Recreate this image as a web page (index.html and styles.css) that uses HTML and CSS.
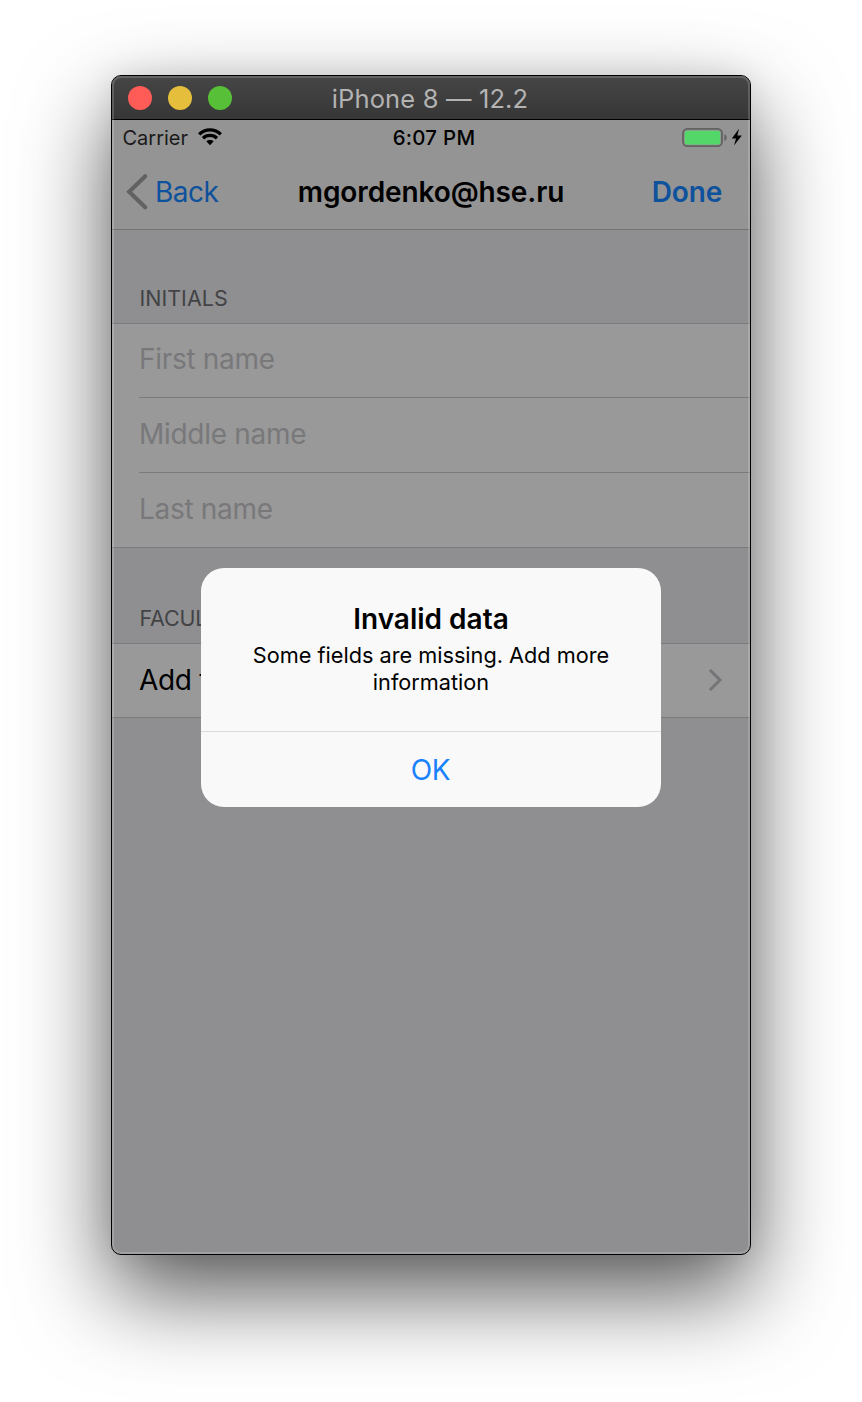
FILE: index.html
```html
<!DOCTYPE html>
<html lang="en">
<head>
<meta charset="utf-8">
<title>iPhone 8 — 12.2</title>
<link rel="stylesheet" href="styles.css">
</head>
<body>
<main class="window">
  <header class="titlebar">
    <div class="lights"><i class="light red"></i><i class="light yellow"></i><i class="light green"></i></div>
    <div class="window-title"><span>iPhone 8 — 12.2</span></div>
  </header>
  <div class="screen">
    <div class="status">
      <div class="status-left">
        <span class="carrier">Carrier</span>
        <svg class="wifi" width="24" height="18" viewBox="0 0 24 18">
          <g fill="none" stroke="#000" stroke-width="3.3">
            <path d="M1.2 6.3C7.2.3 16.8.3 22.8 6.3"/>
            <path d="M5 10.2C8.9 6.4 15.1 6.4 19 10.2"/>
          </g>
          <path d="M8.3 13.3C10.4 11.4 13.6 11.4 15.7 13.3L12 17.2Z"/>
        </svg>
      </div>
      <span class="time">6:07 PM</span>
      <div class="status-right">
        <svg width="62" height="22" viewBox="0 0 62 22">
          <rect x="1" y="1.8" width="39" height="17.4" rx="4.5" fill="none" stroke="#626262" stroke-width="1.8"/>
          <rect x="2.8" y="3.8" width="35.4" height="13.6" rx="2.5" fill="#53d769"/>
          <path d="M42.4 7.2C45.4 8.4 45.4 12.8 42.4 14Z" fill="#626262"/>
          <path d="M57 1.8L49.8 11.4H54L52 18.4L59.8 8.6H55.4Z" fill="#000"/>
        </svg>
      </div>
    </div>
    <nav class="nav">
      <div class="back">
        <svg width="24" height="38" viewBox="0 0 24 38"><path d="M20.2 3.3L4.2 18.8L20.2 34.3" fill="none" stroke="#626262" stroke-width="4.2" stroke-linecap="round" stroke-linejoin="miter"/></svg>
        <span class="back-label">Back</span>
      </div>
      <h1 class="nav-title"><span>mgordenko@hse.ru</span></h1>
      <div class="done"><span>Done</span></div>
    </nav>
    <h2 class="section-head initials"><span>INITIALS</span></h2>
    <div class="group">
      <div class="row"><span>First name</span></div>
      <div class="row"><span>Middle name</span></div>
      <div class="row"><span>Last name</span></div>
    </div>
    <h2 class="section-head faculty"><span>FACULTY</span></h2>
    <div class="group">
      <div class="row add">
        <span class="add-label">Add faculty</span>
        <svg width="16" height="24" viewBox="0 0 16 24"><path d="M2 2L12 12L2 22" fill="none" stroke="#757577" stroke-width="3"/></svg>
      </div>
    </div>
    <section class="alert">
      <div class="alert-body">
        <h3 class="alert-title"><span>Invalid data</span></h3>
        <p class="message"><span>Some fields are missing. Add more</span><br><span>information</span></p>
      </div>
      <div class="ok"><span>OK</span></div>
    </section>
  </div>
</main>
</body>
</html>
```
FILE: styles.css
```css
* { box-sizing: border-box; }
body {
  margin: 0;
  height: 1402px;
  padding: 75px 0 0 111px;
  overflow: hidden;
  background: #fff;
  font-family: Inter, "Liberation Sans", sans-serif;
  color: #000;
}
h1, h2, h3, p { margin: 0; }
span { white-space: nowrap; }
.window {
  position: relative;
  width: 640px;
  height: 1180px;
  border: 1px solid #000;
  border-radius: 10px;
  overflow: hidden;
  background: #8f8f91;
  box-shadow: 0 38px 90px rgba(0, 0, 0, .66), 0 0 30px rgba(0, 0, 0, .08);
}
/* light inner edge of the window frame */
.window::after {
  content: "";
  position: absolute;
  inset: 0;
  border: 2px solid rgba(255, 255, 255, .17);
  border-radius: 9px;
  pointer-events: none;
}
.titlebar {
  height: 44px;
  display: grid;
  grid-template-columns: 120px 1fr 120px;
  align-items: center;
  border-bottom: 1px solid #000;
  background: linear-gradient(#464646, #363636);
}
.lights { display: flex; gap: 16px; padding-left: 16px; }
.light { width: 24px; height: 24px; flex: none; border-radius: 50%; }
.red { background: #ff5b57; }
.yellow { background: #e5bf3c; }
.green { background: #58c038; }
.window-title {
  padding: 2px 2px 0 0;
  text-align: center;
  font-size: 25.5px;
  letter-spacing: .15px;
  line-height: 42px;
  color: #b3b3b3;
}
.screen { position: relative; height: 1134px; }
.status {
  height: 36px;
  display: grid;
  grid-template-columns: 1fr auto 1fr;
  background: #949494;
  font-size: 20px;
  line-height: 36px;
}
.status-left { display: flex; gap: 10px; padding-left: 10.5px; }
.carrier { color: #1a1a1a; }
.wifi { margin-top: 8px; }
.time { font-weight: 500; font-size: 20.4px; letter-spacing: .3px; padding-left: 6px; }
.status-right { display: flex; justify-content: flex-end; padding: 7px 6px 0 0; }
.nav {
  height: 74px;
  display: grid;
  grid-template-columns: 150px 1fr 150px;
  border-bottom: 1px solid #737374;
  background: #949494;
  font-size: 28px;
  line-height: 72px;
}
.back { display: flex; gap: 6px; padding-left: 13px; letter-spacing: -.5px; color: #0e519c; }
.back svg { margin-top: 17px; }
.nav-title { text-align: center; font-size: 28px; font-weight: 600; letter-spacing: -.1px; }
.done { padding-right: 28px; text-align: right; font-weight: 600; letter-spacing: -.2px; color: #0e519c; }
.section-head {
  padding-left: 27.5px;
  font-size: 21.5px;
  font-weight: 400;
  line-height: 28px;
  color: #434345;
}
.initials { height: 93px; padding-top: 54px; }
.faculty { height: 95px; padding-top: 56px; letter-spacing: -.2px; }
.group {
  padding-left: 27px;
  border-top: 1px solid #7b7b7d;
  border-bottom: 1px solid #7b7b7d;
  background: #999;
}
.row {
  height: 75px;
  border-bottom: 1px solid #7b7b7d;
  font-size: 28px;
  line-height: 72px;
  letter-spacing: -.3px;
  color: #78787b;
}
.row:first-child { height: 74px; line-height: 71px; }
.row:last-child { height: 74px; border-bottom: 0; }
.add {
  display: flex;
  align-items: center;
  justify-content: space-between;
  padding-right: 26px;
  padding-bottom: 2px;
}
.row.add { height: 73px; line-height: 73px; color: #000; }
.add-label { padding-top: 1px; }
.alert {
  position: absolute;
  left: 89.3px;
  top: 448px;
  width: 459.4px;
  height: 239px;
  border-radius: 23px;
  overflow: hidden;
  background: #f9f9f9;
  text-align: center;
}
.alert-body { height: 164px; padding-top: 33px; border-bottom: 1px solid #dbdbdd; }
.alert-title { font-size: 28px; font-weight: 600; line-height: 36px; }
.message { padding-top: 5px; font-size: 21.7px; line-height: 27px; }
.ok { padding-right: 1px; font-size: 28px; letter-spacing: -.4px; line-height: 76px; color: #1a82fb; }
```
